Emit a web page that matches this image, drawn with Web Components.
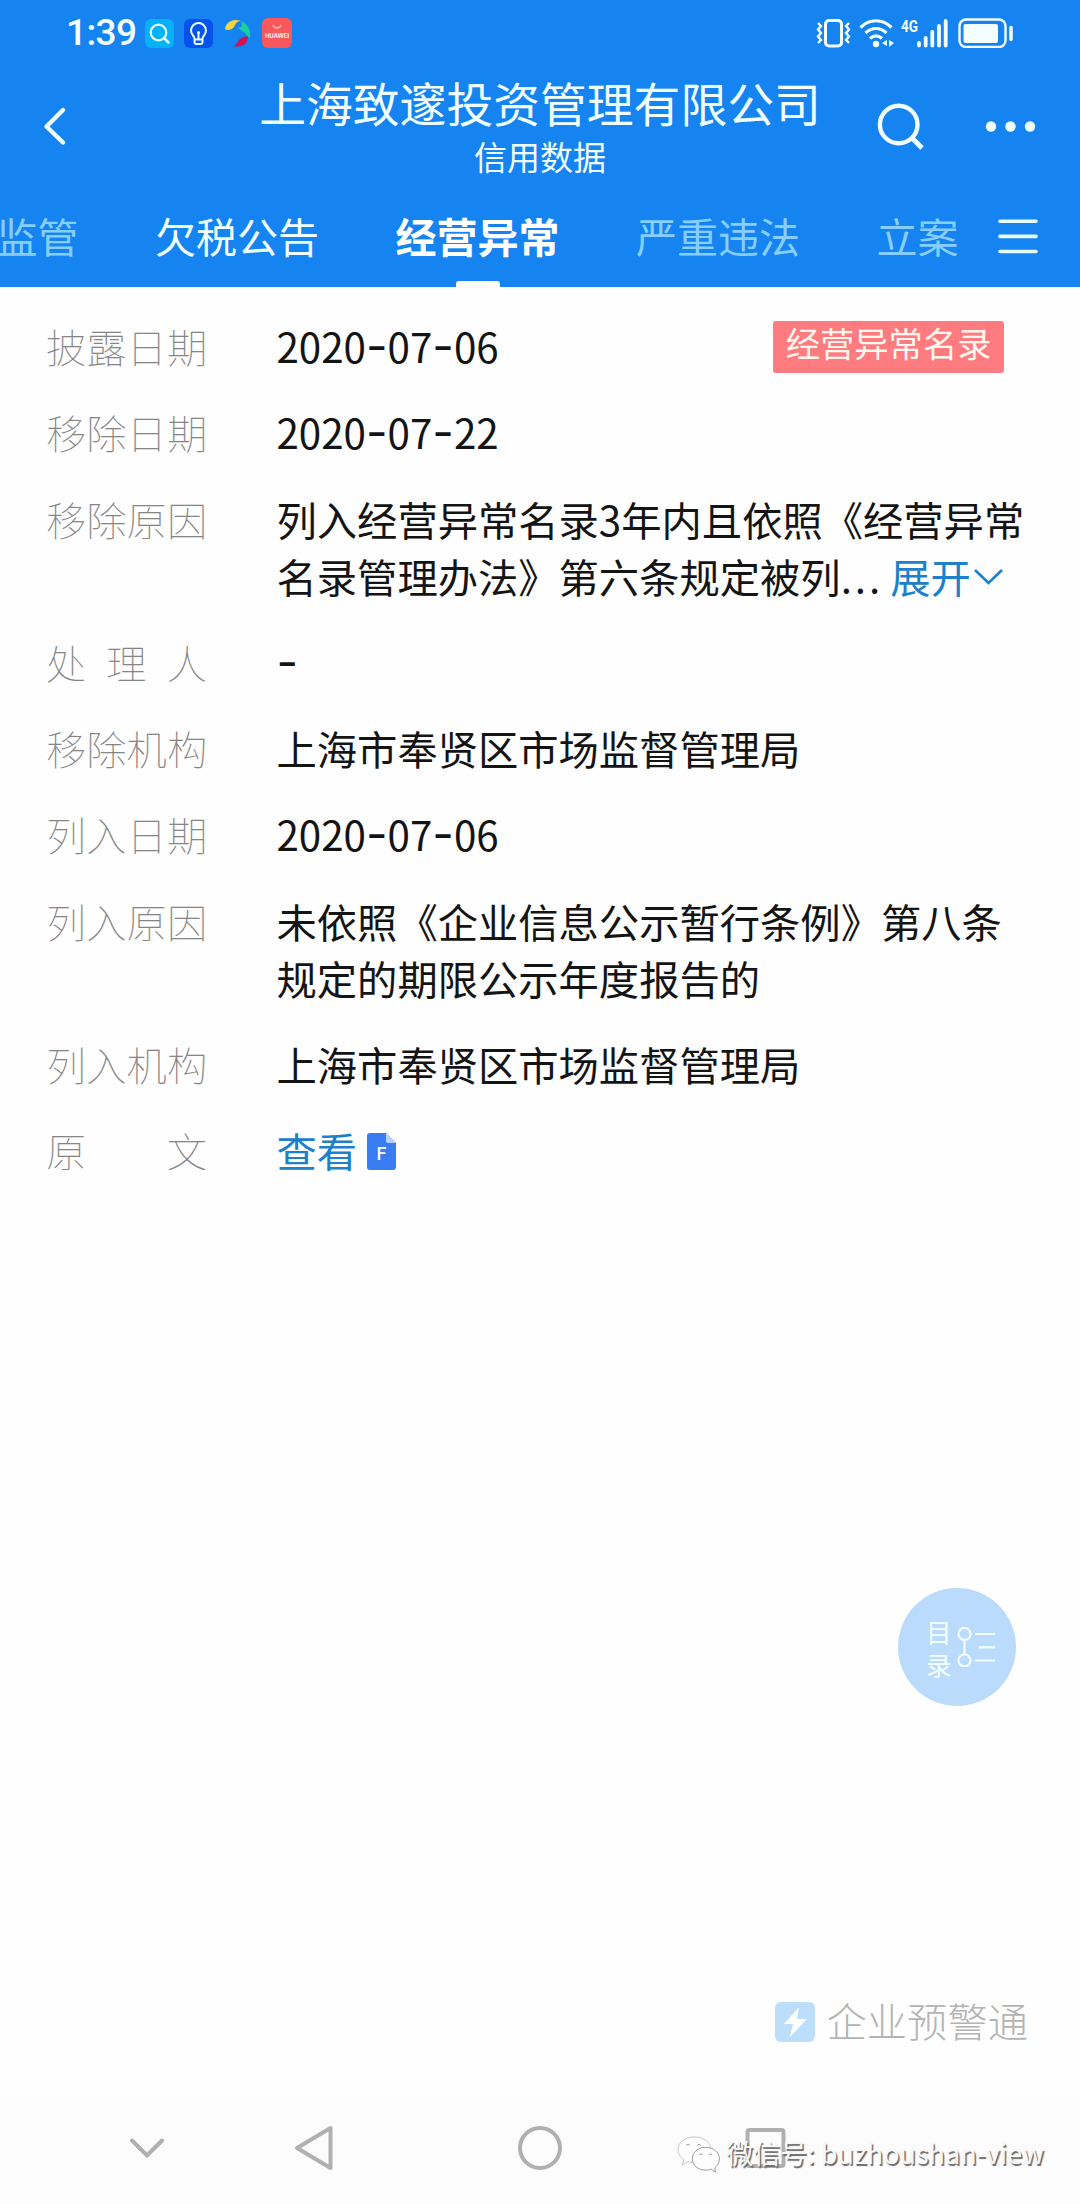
<!DOCTYPE html>
<html lang="zh-CN">
<head>
  <meta charset="UTF-8">
  <meta name="viewport" content="width=device-width, initial-scale=1.0">
  <title>信用数据</title>
  <style>
    body {
      margin: 0;
      background: #fefefe;
      color: #141414;
      font-family: "Noto Sans CJK SC", sans-serif;
    }

    .dash {
      font-family: Inter, sans-serif;
      font-size: 47px;
      line-height: 1;
    }

    .dots {
      margin-right: 7px;
      letter-spacing: 3px;
    }
  </style>
</head>
<body>
  <credit-page>
    <app-header slot="header">
      <status-bar slot="status"></status-bar>
      <span slot="title">上海致邃投资管理有限公司</span>
      <span slot="subtitle">信用数据</span>
      <tab-bar slot="tabs">
        <tab-item faded>监管</tab-item>
        <tab-item>欠税公告</tab-item>
        <tab-item active>经营异常</tab-item>
        <tab-item faded>严重违法</tab-item>
        <tab-item faded>立案</tab-item>
      </tab-bar>
    </app-header>

    <info-list>
      <info-row label="披露日期">2020<span class="dash">-</span>07<span class="dash">-</span>06<tag-badge slot="extra">经营异常名录</tag-badge></info-row>
      <info-row label="移除日期">2020<span class="dash">-</span>07<span class="dash">-</span>22</info-row>
      <info-row label="移除原因">列入经营异常名录3年内且依照《经营异常<br>名录管理办法》第六条规定被列<span class="dots">...</span><text-link icon="down">展开</text-link></info-row>
      <info-row label="处理人"><span class="dash">-</span></info-row>
      <info-row label="移除机构">上海市奉贤区市场监督管理局</info-row>
      <info-row label="列入日期">2020<span class="dash">-</span>07<span class="dash">-</span>06</info-row>
      <info-row label="列入原因">未依照《企业信息公示暂行条例》第八条<br>规定的期限公示年度报告的</info-row>
      <info-row label="列入机构">上海市奉贤区市场监督管理局</info-row>
      <info-row label="原文"><text-link icon="file">查看</text-link></info-row>
    </info-list>

    <catalog-button slot="float"></catalog-button>
    <brand-mark slot="brand">企业预警通</brand-mark>
    <system-nav slot="nav"></system-nav>
    <wechat-mark slot="float">微信号: buzhoushan-view</wechat-mark>
  </credit-page>

  <script>
    // 공통: 섀도 루트를 열고 마크업을 채우는 기본 클래스
    class BaseElement extends HTMLElement {
      constructor() {
        super();
        this.attachShadow({ mode: 'open' });
      }

      connectedCallback() {
        this.shadowRoot.innerHTML = this.render();
      }
    }

    // 페이지 골격
    class CreditPage extends BaseElement {
      render() {
        return /* html */ `
          <style>
            :host {
              display: flex;
              flex-direction: column;
              position: relative;
              height: 2204px;
              overflow: hidden;
            }
            main { flex: 1; }
          </style>
          <slot name="header"></slot>
          <main><slot></slot></main>
          <slot name="brand"></slot>
          <slot name="nav"></slot>
          <slot name="float"></slot>
        `;
      }
    }

    // 상태 표시줄
    class StatusBar extends BaseElement {
      render() {
        return /* html */ `
          <style>
            :host {
              display: flex;
              align-items: center;
              height: 66px;
              padding: 0 66px 0 66px;
              box-sizing: border-box;
              color: #f4ffff;
            }
            time {
              width: 79px;
              font: 500 37px/66px Roboto, sans-serif;
              letter-spacing: -0.6px;
            }
            .apps, .signals { display: flex; align-items: center; }
            .apps { gap: 10px; }
            .signals { margin-left: auto; }
            svg { display: block; }
          </style>
          <time>1:39</time>
          <div class="apps">
            <svg width="29" height="29" viewBox="0 0 29 29" fill="none">
              <rect width="29" height="29" rx="6" fill="#05b1fb"/>
              <circle cx="13.5" cy="13.5" r="7.8" stroke="#e8ffff" stroke-width="2.2"/>
              <path d="M19 19l4.500 4.500" stroke="#e8ffff" stroke-width="2.500" stroke-linecap="round"/>
            </svg>
            <svg width="29" height="29" viewBox="0 0 29 29" fill="none" stroke="#e8ffff" stroke-width="2">
              <rect width="29" height="29" rx="6" fill="#0652ea" stroke="none"/>
              <path d="M10.500 19.500c0-2-3.500-4-3.500-8a7.500 7.500 0 0 1 15 0c0 4-3.500 6-3.500 8v3.500a2 2 0 0 1-2 2h-4a2 2 0 0 1-2-2zM10.500 20.500h8M14.500 20v-6" />
              <circle cx="14.500" cy="13.500" r="1.500" fill="#e8ffff" stroke="none"/>
            </svg>
            <svg width="29" height="29" viewBox="0 0 29 29">
              <path d="M2 10C3 3 10-1 18 2c-4 0-5 2-7 6-2 3-7 4-9 2z" fill="#f8d53c"/>
              <path d="M18 2c7 3 10 9 9 17-2-1-3-3-5-5-3-3-6-3-7-6 4 1 5-2 3-6z" fill="#17cf9f"/>
              <path d="M25 18c0 7-6 11-15 9 4-1 4-4 7-7 3-2 5-3 8-2z" fill="#d5124f"/>
            </svg>
            <svg width="30" height="30" viewBox="0 0 30 30">
              <rect width="30" height="30" rx="6" fill="#f9575b"/>
              <path d="M11 7c1 4 7 4 8 0" fill="none" stroke="#ffc6b5" stroke-width="1.300"/>
              <text x="15" y="19.500" text-anchor="middle" textLength="24" lengthAdjust="spacingAndGlyphs" fill="#fff" font-family="Roboto, sans-serif" font-size="6.500" font-weight="500">HUAWEI</text>
            </svg>
          </div>
          <div class="signals">
            <svg width="36" height="30" viewBox="0 0 36 30" fill="none" stroke="currentColor">
              <rect x="9.500" y="2.500" width="16" height="25.500" rx="3.500" stroke-width="3"/>
              <path d="M2 5l3 3-3 3.500 3 3.500-3 3.500 3 3.500-3 3M33 5l-3 3 3 3.500-3 3.500 3 3.500-3 3.500 3 3" stroke-width="2.400"/>
            </svg>
            <svg width="49" height="30" viewBox="-7 0 49 30" fill="none" stroke="currentColor" stroke-width="3.200">
              <path d="M1.500 9.500c9-9 22-9 31 0M6.500 15c6.500-6 14.500-6 21 0M11 20.500c4-3.500 8-3.500 12 0"/>
              <circle cx="17" cy="26" r="3.200" fill="currentColor" stroke="none"/>
              <path d="M28 22v6l-5-3zM30 22v7l5-4z" fill="currentColor" stroke="none"/>
            </svg>
            <svg width="57" height="30" viewBox="0 0 57 30" fill="none" stroke="currentColor">
              <text x="0" y="14" fill="currentColor" stroke="none" font-family="Roboto, sans-serif" font-size="16.500" font-weight="700" textLength="17" lengthAdjust="spacingAndGlyphs">4G</text>
              <path d="M18 25v2.500M24.700 20v7.500M31.300 14v13.500M38 8v19.500M44.700 3v24.500" stroke-width="3.800" stroke-linecap="round"/>
            </svg>
            <svg width="56" height="30" viewBox="0 0 56 30" fill="none" stroke="currentColor">
              <rect x="1.500" y="1.500" width="46" height="27.500" rx="6.500" stroke-width="2.400"/>
              <rect x="5.500" y="6" width="34.500" height="19" rx="2" fill="currentColor" stroke="none"/>
              <path d="M53 9.500v12" stroke-width="3.500" stroke-linecap="round"/>
            </svg>
          </div>
        `;
      }
    }

    // 상단 헤더: 뒤로 가기, 제목, 검색, 더 보기
    class AppHeader extends BaseElement {
      render() {
        return /* html */ `
          <style>
            :host {
              display: block;
              height: 286.5px;
              background: #1583f0;
              color: #f0ffff;
            }
            .bar {
              display: grid;
              grid-template-columns: 240px 1fr 240px;
              height: 122px;
            }
            .back, .actions { display: flex; align-items: center; }
            .back { padding: 0 0 2px 42px; }
            .actions { gap: 60px; padding-left: 36px; }
            .titles {
              display: flex;
              flex-direction: column;
              align-items: center;
              padding-top: 8px;
              box-sizing: border-box;
              white-space: nowrap;
            }
            h1, p { margin: 0; font-weight: 400; }
            h1 { font-size: 46.800px; line-height: 56px; }
            p { font-size: 33px; line-height: 53px; }
          </style>
          <slot name="status"></slot>
          <div class="bar">
            <div class="back">
              <svg width="26" height="40" viewBox="0 0 26 40" fill="none" stroke="currentColor" stroke-width="4.400" stroke-linecap="round" stroke-linejoin="round">
                <path d="M21 4L4.500 20.500 21 36.500"/>
              </svg>
            </div>
            <div class="titles">
              <h1><slot name="title"></slot></h1>
              <p><slot name="subtitle"></slot></p>
            </div>
            <div class="actions">
              <svg width="48" height="48" viewBox="0 0 48 48" fill="none" stroke="currentColor" stroke-width="4.400">
                <circle cx="22.700" cy="21.500" r="18.800"/>
                <path d="M36 35l10 10" stroke-width="5"/>
              </svg>
              <svg width="52" height="12" viewBox="0 0 52 12" fill="currentColor">
                <circle cx="7" cy="5.500" r="5.200"/>
                <circle cx="26.500" cy="5.500" r="5.200"/>
                <circle cx="46" cy="5.500" r="5.200"/>
              </svg>
            </div>
          </div>
          <slot name="tabs"></slot>
        `;
      }
    }

    class TabBar extends BaseElement {
      render() {
        return /* html */ `
          <style>
            :host {
              display: flex;
              height: 98.500px;
            }
            .tabs {
              display: flex;
              gap: 76.500px;
              width: 960px;
              margin-right: 38px;
              overflow: hidden;
            }
            .tabs::before {
              content: "";
              flex: none;
              width: 0;
              margin-left: -80px;
            }
            svg { display: block; margin-top: 28px; }
          </style>
          <div class="tabs"><slot></slot></div>
          <svg width="40" height="40" viewBox="0 0 40 40" fill="none" stroke="#e6ffff" stroke-width="3.600" stroke-linecap="round">
            <path d="M2 5.300h36M2 20.400h36M2 35.500h36"/>
          </svg>
        `;
      }
    }

    class TabItem extends BaseElement {
      render() {
        return /* html */ `
          <style>
            :host {
              display: flex;
              flex: none;
              flex-direction: column;
              align-items: center;
              font-size: 41px;
              line-height: 94px;
              white-space: nowrap;
            }
            :host([faded]) { color: #85ceff; }
            :host([active]) { color: #fff; font-weight: 700; }
            :host([active])::after {
              content: "";
              width: 44px;
              height: 6px;
              margin-top: -1px;
              border-radius: 3px 3px 0 0;
              background: #fff;
            }
          </style>
          <slot></slot>
        `;
      }
    }

    class InfoList extends BaseElement {
      render() {
        return /* html */ `
          <style>
            :host {
              display: flex;
              flex-direction: column;
              gap: 29.250px;
              padding: 30.500px 46px 0;
            }
          </style>
          <slot></slot>
        `;
      }
    }

    // 라벨 + 값 한 줄, 라벨은 양쪽 정렬
    class InfoRow extends BaseElement {
      render() {
        return /* html */ `
          <style>
            :host {
              display: flex;
              font-size: 40.300px;
              line-height: 57px;
              white-space: nowrap;
            }
            .label {
              flex: none;
              width: 161px;
              margin-right: 69.500px;
              color: #858585;
              font-weight: 100;
              text-align: justify;
              text-align-last: justify;
              text-justify: inter-character;
            }
            .value { flex: 1; height: fit-content; }
            ::slotted([slot="extra"]) { margin: 4px 30px 0 0; }
          </style>
          <div class="label">${this.getAttribute('label')}</div>
          <div class="value"><slot></slot></div>
          <slot name="extra"></slot>
        `;
      }
    }

    class TagBadge extends BaseElement {
      render() {
        return /* html */ `
          <style>
            :host {
              display: block;
              height: 52px;
              padding: 0 12.500px;
              border-radius: 3px;
              background: #fe7b80;
              color: #fff6ee;
              font-size: 34.300px;
              line-height: 43px;
            }
          </style>
          <slot></slot>
        `;
      }
    }

    class TextLink extends BaseElement {
      get icon() {
        if (this.getAttribute('icon') === 'down') {
          return /* html */ `
            <svg width="32" height="20" viewBox="0 0 32 20" fill="none" stroke="currentColor" stroke-width="2.600">
              <path d="M4 3l13.500 13L31 3"/>
            </svg>
          `;
        }
        return /* html */ `
          <svg class="file" width="29" height="37" viewBox="0 0 29 37">
            <path d="M3 0h16l10 10v24a3 3 0 0 1-3 3H3a3 3 0 0 1-3-3V3a3 3 0 0 1 3-3z" fill="#397bf1"/>
            <path d="M19 0l10 10h-8a2 2 0 0 1-2-2z" fill="#b8d3fb"/>
            <text x="14.500" y="27" text-anchor="middle" fill="#fff" font-family="Roboto, sans-serif" font-size="18" font-weight="500">F</text>
          </svg>
        `;
      }

      render() {
        return /* html */ `
          <style>
            :host {
              display: inline-flex;
              align-items: center;
              height: 57px;
              vertical-align: top;
              color: #1c80cb;
            }
            svg { margin-top: 4px; }
            .file { margin: 3px 0 0 9.500px; }
          </style>
          <slot></slot>${this.icon}
        `;
      }
    }

    // 떠 있는 목차 버튼
    class CatalogButton extends BaseElement {
      render() {
        return /* html */ `
          <style>
            :host {
              position: absolute;
              top: 1588px;
              right: 64px;
              display: flex;
              align-items: center;
              gap: 6px;
              width: 118px;
              height: 118px;
              padding-left: 28px;
              box-sizing: border-box;
              border-radius: 50%;
              background: #badbfb;
              color: #f2ffff;
            }
            span { width: 25px; font-size: 25.500px; line-height: 33px; }
          </style>
          <span>目<br>录</span>
          <svg width="40" height="40" viewBox="0 0 40 40" fill="none" stroke="currentColor" stroke-width="2.200">
            <circle cx="7.500" cy="7" r="6"/>
            <circle cx="7.500" cy="33.500" r="6"/>
            <path d="M7.500 13v14.500M18 7h20M22 20.300h16M18 33.500h20"/>
          </svg>
        `;
      }
    }

    class BrandMark extends BaseElement {
      render() {
        return /* html */ `
          <style>
            :host {
              display: flex;
              justify-content: flex-end;
              align-items: center;
              gap: 12px;
              height: 60px;
              padding: 0 52px 44px 0;
              color: #b4b4b4;
              font-size: 40.300px;
              font-weight: 300;
              line-height: 56px;
            }
            span { height: 60px; }
          </style>
          <svg width="40" height="40" viewBox="0 0 40 40">
            <rect width="40" height="40" rx="6" fill="#bcdefb"/>
            <path d="M24 5L9 22h9l-3 13 17-18H22z" fill="#fff"/>
          </svg>
          <span><slot></slot></span>
        `;
      }
    }

    // 안드로이드 내비게이션 바
    class SystemNav extends BaseElement {
      render() {
        return /* html */ `
          <style>
            :host {
              display: grid;
              grid-template-columns: 167px 226px 224.500px 46px;
              align-items: center;
              height: 108px;
              padding: 0 0 4px 124px;
              box-sizing: border-box;
              background: #fcfcfc;
              color: #b0b0b0;
            }
          </style>
          <svg width="46" height="46" viewBox="0 0 46 46" fill="none" stroke="currentColor" stroke-width="4" stroke-linecap="round">
            <path d="M8 15.500l15 15 15-15"/>
          </svg>
          <svg width="46" height="46" viewBox="0 0 46 46" fill="none" stroke="currentColor" stroke-width="4" stroke-linejoin="round">
            <path d="M39.500 3v40L6 23z"/>
          </svg>
          <svg width="46" height="46" viewBox="0 0 46 46" fill="none" stroke="currentColor" stroke-width="4">
            <circle cx="23" cy="23" r="20"/>
          </svg>
          <svg width="46" height="46" viewBox="0 0 46 46" fill="none" stroke="currentColor" stroke-width="4">
            <rect x="5.500" y="5" width="36" height="36" rx="2"/>
          </svg>
        `;
      }
    }

    // 오른쪽 아래 워터마크
    class WechatMark extends BaseElement {
      render() {
        return /* html */ `
          <style>
            :host {
              position: absolute;
              right: 36px;
              bottom: 30px;
              display: flex;
              align-items: center;
              gap: 5px;
              color: #f8f8f8;
              font-size: 27px;
              line-height: 38px;
              text-shadow: 1.500px 1.500px 1px #666;
              white-space: nowrap;
            }
            span { padding-bottom: 2px; }
          </style>
          <svg width="44" height="38" viewBox="0 0 46 40" fill="#fdfdfd" stroke="#999" stroke-width="1">
            <path d="M18 2C8 2 1 8 1 15.500c0 4.500 2 8 6 10.500l-1.500 5.500 6-3.500c2 .700 4 1 7 1 10 0 17-6 17-13.500S28 2 18 2z" stroke="#c4c4c4"/>
            <path d="M30 13c-8 0-14 5-14 12s6 12 14 12c2 0 4-.300 5.500-1l5 3-1-4.500c3-2 5-5.500 5-9.500 0-7-6.500-12-14.500-12z"/>
            <g fill="none"><path d="M9.500 11q2-2.500 4 0M21 11q2-2.500 4 0M23 21q2-2.500 4 0M33 21q2-2.500 4 0"/></g>
          </svg>
          <span><slot></slot></span>
        `;
      }
    }

    // define custom elements
    customElements.define('credit-page', CreditPage);
    customElements.define('status-bar', StatusBar);
    customElements.define('app-header', AppHeader);
    customElements.define('tab-bar', TabBar);
    customElements.define('tab-item', TabItem);
    customElements.define('info-list', InfoList);
    customElements.define('info-row', InfoRow);
    customElements.define('tag-badge', TagBadge);
    customElements.define('text-link', TextLink);
    customElements.define('catalog-button', CatalogButton);
    customElements.define('brand-mark', BrandMark);
    customElements.define('system-nav', SystemNav);
    customElements.define('wechat-mark', WechatMark);
  </script>
</body>
</html>
